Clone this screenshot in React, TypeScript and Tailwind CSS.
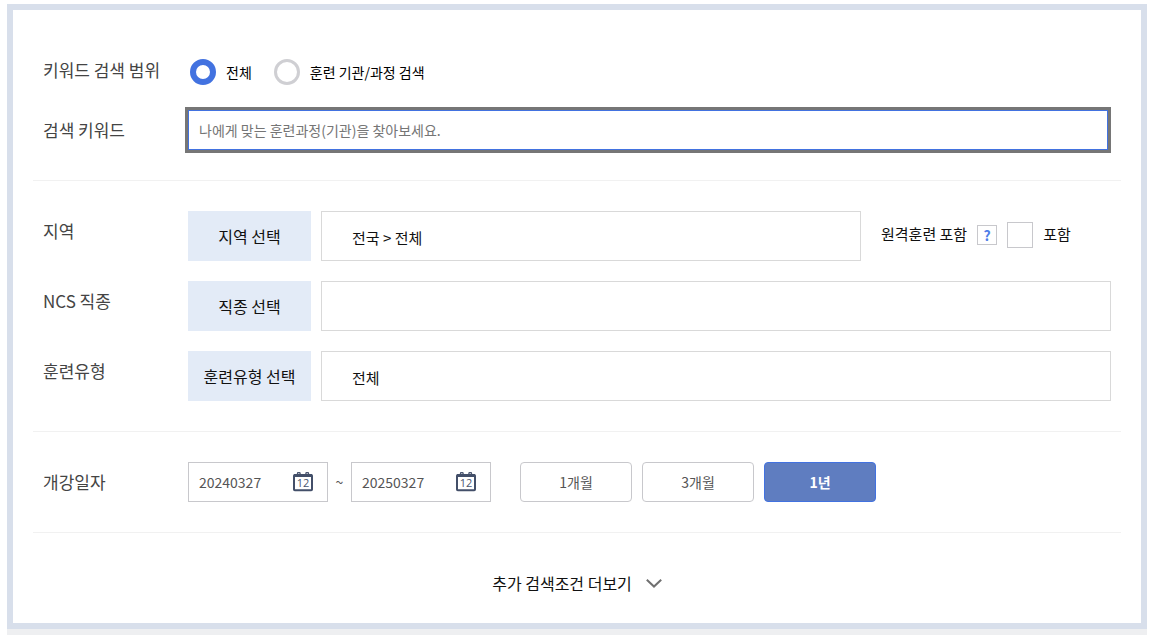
import React, { useState } from 'react';

const periods = ["1개월", "3개월", "1년"];

const fontStack = "font-['Noto_Sans_CJK_KR',sans-serif]";

function CalendarIcon() {
  return (
    <svg width="20" height="20" viewBox="0 0 20 20" fill="none" aria-hidden="true">
      <path d="M4.5 3V1.5a1 1 0 0 1 1-1h.6a1 1 0 0 1 1 1V3M12.9 3V1.5a1 1 0 0 1 1-1h.6a1 1 0 0 1 1 1V3" stroke="#4b5670" strokeWidth="1.3" />
      <rect x="1" y="3" width="18" height="15.2" rx="0.8" stroke="#434f69" strokeWidth="2" />
      <path d="M1 3.5h18" stroke="#434f69" strokeWidth="3" />
      <text x="10" y="15" textAnchor="middle" fontSize="11" fontFamily="Open Sans, sans-serif" fill="#4b5670">12</text>
    </svg>
  )
}

function Row({ label, htmlFor, children }: { label: string; htmlFor?: string; children: React.ReactNode }) {
  const labelClass = "w-[145px] shrink-0 text-[17px] leading-10 text-[#444]";
  return (
    <div className="flex items-start">
      {htmlFor
        ? <label htmlFor={htmlFor} className={labelClass}>{label}</label>
        : <span className={labelClass}>{label}</span>}
      <div className="flex min-w-0 flex-1 items-center">{children}</div>
    </div>
  )
}

function SelectButton({ children }: { children: React.ReactNode }) {
  return (
    <button type="button" className="mr-[10px] h-[50px] w-[123px] shrink-0 cursor-pointer bg-[#e3ebf7] text-base text-[#111]">
      {children}
    </button>
  )
}

function ResultBox({ children }: { children?: React.ReactNode }) {
  return (
    <div className="h-[50px] min-w-0 flex-1 border border-[#d9d9d9] px-[30px] pt-[3px] text-[15px] leading-[46px] text-[#111]">
      {children}
    </div>
  )
}

function DateField({ id, label, value, onChange }: { id: string; label: string; value: string; onChange: (v: string) => void }) {
  return (
    <div className="flex h-10 w-[140px] items-center justify-between border border-[#c8c8cc] pr-[14px] pl-[10px]">
      <input
        id={id}
        type="text"
        aria-label={label}
        value={value}
        onChange={(e) => onChange(e.target.value)}
        className="w-20 min-w-0 text-sm text-[#555] outline-none"
      />
      <button type="button" aria-label="달력" className="cursor-pointer">
        <CalendarIcon />
      </button>
    </div>
  )
}

export default function App() {
  const [scope, setScope] = useState("all");
  const [keyword, setKeyword] = useState("");
  const [remote, setRemote] = useState(false);
  const [startDate, setStartDate] = useState("20240327");
  const [endDate, setEndDate] = useState("20250327");
  const [period, setPeriod] = useState("1년");

  const radioClass = "size-[26px] shrink-0 cursor-pointer appearance-none rounded-full border-3 border-[#cfcfd3] bg-white checked:border-6 checked:border-[#4272e0]";

  return (
    <div className={`${fontStack} bg-white pt-1 pr-1 pl-[7px]`}>
      <form className="border-6 border-[#d8dfeb] bg-white px-5" onSubmit={(e) => e.preventDefault()}>

        {/* Keyword */}
        <div className="flex flex-col gap-5 border-b border-[#f1f1f1] px-[10px] pt-10 pb-[30px]">
          <Row label="키워드 검색 범위">
            <div className="flex items-center pt-[9px] pl-[2px] text-sm text-black">
              <input id="scope-all" type="radio" name="scope" checked={scope === "all"} onChange={() => setScope("all")} className={radioClass} />
              <label htmlFor="scope-all" className="mr-[22px] ml-[10px]">전체</label>
              <input id="scope-org" type="radio" name="scope" checked={scope === "org"} onChange={() => setScope("org")} className={radioClass} />
              <label htmlFor="scope-org" className="ml-[10px]">훈련 기관/과정 검색</label>
            </div>
          </Row>
          <Row label="검색 키워드" htmlFor="keyword">
            <input
              id="keyword"
              type="text"
              value={keyword}
              onChange={(e) => setKeyword(e.target.value)}
              placeholder="나에게 맞는 훈련과정(기관)을 찾아보세요."
              className="mr-[3px] h-10 w-full border border-[#4272e0] px-[10px] text-sm text-[#444] outline-3 outline-[#767676] placeholder:text-[#757575]"
            />
          </Row>
        </div>

        {/* Region, job, training type */}
        <div className="flex flex-col gap-5 border-b border-[#f1f1f1] px-[10px] py-[30px]">
          <Row label="지역">
            <SelectButton>지역 선택</SelectButton>
            <ResultBox>전국 &gt; 전체</ResultBox>
            <div className="flex w-[250px] shrink-0 items-center gap-[10px] pb-[3px] pl-5 text-[15px] text-[#111]">
              <span>원격훈련 포함</span>
              <button type="button" aria-label="도움말" className="flex size-5 cursor-pointer items-center justify-center border border-[#c8c8cc] text-sm font-bold text-[#4f7ee8]">
                ?
              </button>
              <input
                id="remote"
                type="checkbox"
                checked={remote}
                onChange={(e) => setRemote(e.target.checked)}
                className="size-[26px] cursor-pointer appearance-none border border-[#c8c8cc] bg-white checked:bg-[#4272e0]"
              />
              <label htmlFor="remote">포함</label>
            </div>
          </Row>
          <Row label="NCS 직종">
            <SelectButton>직종 선택</SelectButton>
            <ResultBox />
          </Row>
          <Row label="훈련유형">
            <SelectButton>훈련유형 선택</SelectButton>
            <ResultBox>전체</ResultBox>
          </Row>
        </div>

        {/* Start date */}
        <div className="border-b border-[#f1f1f1] px-[10px] py-[30px]">
          <Row label="개강일자" htmlFor="start-date">
            <DateField id="start-date" label="개강일자 시작" value={startDate} onChange={setStartDate} />
            <span className="w-[23px] text-center text-sm text-[#555]">~</span>
            <DateField id="end-date" label="개강일자 종료" value={endDate} onChange={setEndDate} />
            <div className="ml-[29px] flex gap-[10px]">
              {periods.map((p) => (
                <button
                  key={p}
                  type="button"
                  onClick={() => setPeriod(p)}
                  className={`h-10 w-28 cursor-pointer rounded border text-sm ${period === p ? "border-[#4272e0] bg-[#5f7dc0] font-bold text-white" : "border-[#c8c8cc] bg-white text-[#555]"}`}
                >
                  {p}
                </button>
              ))}
            </div>
          </Row>
        </div>

        {/* More options */}
        <div className="flex justify-center pt-[38px] pb-7">
          <button type="button" className="flex cursor-pointer items-center gap-[14px] text-base text-[#111]">
            추가 검색조건 더보기
            <svg width="16" height="9" viewBox="0 0 16 9" fill="none" aria-hidden="true">
              <path d="M0.8 0.8L8 7.6L15.2 0.8" stroke="#707070" strokeWidth="2" />
            </svg>
          </button>
        </div>
      </form>
      <div className="h-[6px] bg-[#eeeff1]" />
    </div>
  )
}
